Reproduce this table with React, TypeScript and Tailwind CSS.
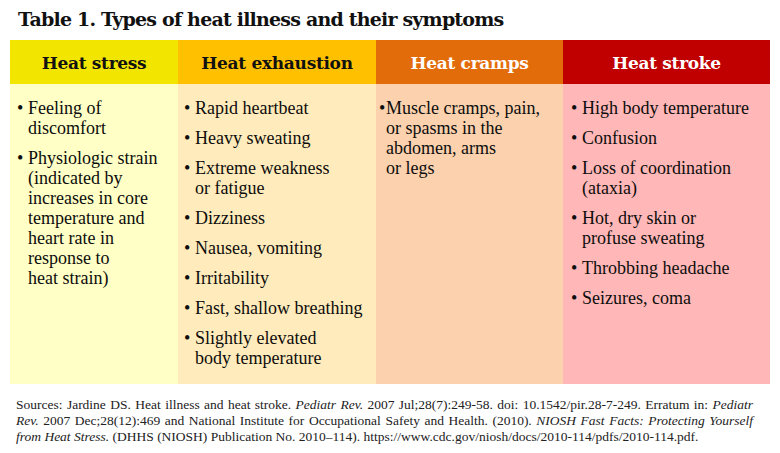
import React from 'react';

type Col = {
  title: string;
  head: string;
  headText: string;
  body: string;
  pad: string;
  bulletW: string;
  items: string[][];
};

const cols: Col[] = [
  {
    title: 'Heat stress',
    head: 'bg-[#f2e600]',
    headText: 'text-[#111]',
    body: 'bg-[#ffffc6]',
    pad: 'pl-[7px]',
    bulletW: 'w-[11px]',
    items: [
      ['Feeling of', 'discomfort'],
      ['Physiologic strain', '(indicated by', 'increases in core', 'temperature and', 'heart rate in', 'response to', 'heat strain)'],
    ],
  },
  {
    title: 'Heat exhaustion',
    head: 'bg-[#ffc000]',
    headText: 'text-[#111]',
    body: 'bg-[#ffebbb]',
    pad: 'pl-[6px]',
    bulletW: 'w-[11px]',
    items: [
      ['Rapid heartbeat'],
      ['Heavy sweating'],
      ['Extreme weakness', 'or fatigue'],
      ['Dizziness'],
      ['Nausea, vomiting'],
      ['Irritability'],
      ['Fast, shallow breathing'],
      ['Slightly elevated', 'body temperature'],
    ],
  },
  {
    title: 'Heat cramps',
    head: 'bg-[#e36c0a]',
    headText: 'text-white',
    body: 'bg-[#fbd1ae]',
    pad: 'pl-[3px]',
    bulletW: 'w-[7px]',
    items: [['Muscle cramps, pain,', 'or spasms in the', 'abdomen, arms', 'or legs']],
  },
  {
    title: 'Heat stroke',
    head: 'bg-[#c00000]',
    headText: 'text-white',
    body: 'bg-[#ffb7b7]',
    pad: 'pl-[8px]',
    bulletW: 'w-[11px]',
    items: [
      ['High body temperature'],
      ['Confusion'],
      ['Loss of coordination', '(ataxia)'],
      ['Hot, dry skin or', 'profuse sweating'],
      ['Throbbing headache'],
      ['Seizures, coma'],
    ],
  },
];

const App: React.FC = () => {
  return (
    <div className="w-[780px] h-[453px] bg-white overflow-hidden">
      <h1 className="pl-[18px] pt-[5px] h-[40px] text-[19px] font-bold text-[#111] font-['DejaVu_Serif',serif] tracking-[-0.8px]">
        Table 1. Types of heat illness and their symptoms
      </h1>

      {/* table */}
      <div className="ml-[10px] grid grid-cols-[168px_198px_187px_207px]">
        {cols.map(c => (
          <div key={c.title} className="flex flex-col">
            <div className={`h-[44px] pt-[3px] flex items-center justify-center ${c.head} ${c.headText} font-['DejaVu_Serif',serif] font-bold text-[17px] tracking-[-0.3px]`}>
              {c.title}
            </div>
            <div className={`h-[300px] pt-[14px] ${c.pad} ${c.body} font-['Liberation_Serif','Times_New_Roman',serif] text-[18px] leading-[20px] text-[#0d0d0d] flex flex-col gap-[10px]`}>
              {c.items.map((lines, i) => (
                <div key={i} className="flex">
                  <span className={`${c.bulletW} shrink-0`}>•</span>
                  <div>
                    {lines.map(l => (
                      <div key={l}>{l}</div>
                    ))}
                  </div>
                </div>
              ))}
            </div>
          </div>
        ))}
      </div>

      <p className="mt-[13px] ml-[16px] w-[737px] text-justify font-['Liberation_Serif','Times_New_Roman',serif] text-[13.5px] leading-[16px] text-[#222]">
        Sources: Jardine DS. Heat illness and heat stroke. <i>Pediatr Rev.</i> 2007 Jul;28(7):249-58. doi: 10.1542/pir.28-7-249. Erratum in: <i>Pediatr Rev.</i> 2007 Dec;28(12):469 and National Institute for Occupational Safety and Health. (2010). <i>NIOSH Fast Facts: Protecting Yourself from Heat Stress.</i> (DHHS (NIOSH) Publication No. 2010–114). https://www.cdc.gov/niosh/docs/2010-114/pdfs/2010-114.pdf.
      </p>
    </div>
  );
};

export default App;
